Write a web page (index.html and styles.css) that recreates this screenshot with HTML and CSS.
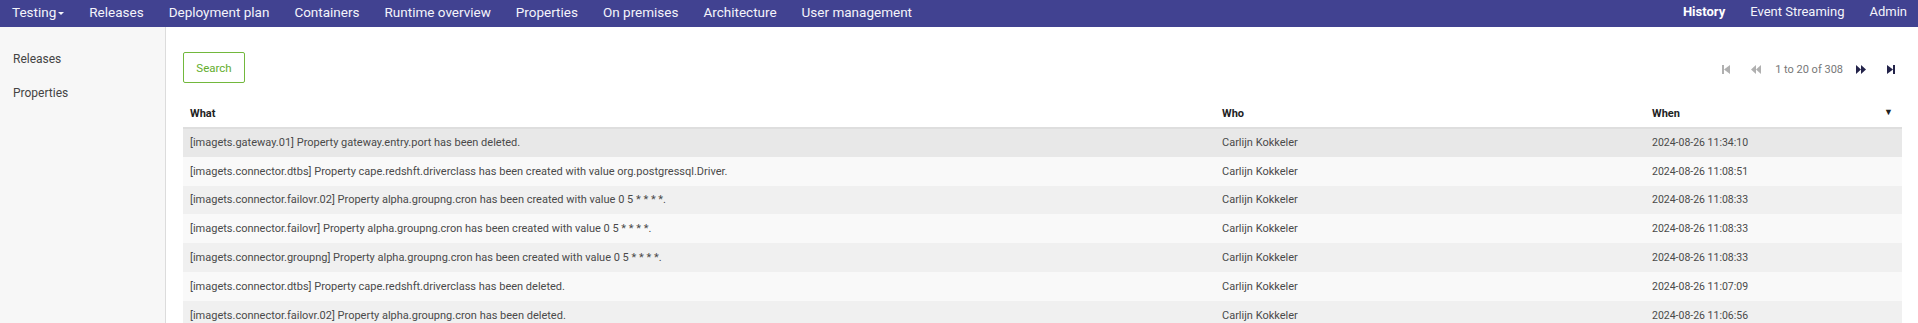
FILE: index.html
```html
<!DOCTYPE html>
<html lang="en">
<head>
    <meta charset="UTF-8"/>
    <meta name="viewport" content="width=device-width,initial-scale=1.0"/>
    <title>History</title>
    <link rel="stylesheet" href="styles.css">
</head>
<body>
<nav class="topbar">
    <ul class="nav nav-left">
        <li><a href="#" class="dropdown">Testing<span class="caret"></span></a></li>
        <li><a href="#">Releases</a></li>
        <li><a href="#">Deployment plan</a></li>
        <li><a href="#">Containers</a></li>
        <li><a href="#">Runtime overview</a></li>
        <li><a href="#">Properties</a></li>
        <li><a href="#">On premises</a></li>
        <li><a href="#">Architecture</a></li>
        <li><a href="#">User management</a></li>
    </ul>
    <ul class="nav nav-right">
        <li><a href="#" class="active">History</a></li>
        <li><a href="#">Event Streaming</a></li>
        <li><a href="#">Admin</a></li>
    </ul>
</nav>

<div class="layout">
    <aside class="sidebar">
        <ul>
            <li><a href="#">Releases</a></li>
            <li><a href="#">Properties</a></li>
        </ul>
    </aside>

    <main class="content">
        <div class="toolbar">
            <button class="btn-search">Search</button>
            <div class="pager">
                <svg class="pg disabled" width="8" height="9" viewBox="0 0 8 9"><rect x="0" y="0" width="2" height="9"/><polygon points="8,0 2,4.5 8,9"/></svg>
                <svg class="pg disabled" width="10" height="9" viewBox="0 0 10 9"><polygon points="5,0 0,4.5 5,9"/><polygon points="10,0 5,4.5 10,9"/></svg>
                <span class="pg-text">1 to 20 of 308</span>
                <svg class="pg" width="10" height="9" viewBox="0 0 10 9"><polygon points="0,0 5,4.5 0,9"/><polygon points="5,0 10,4.5 5,9"/></svg>
                <svg class="pg" width="8" height="9" viewBox="0 0 8 9"><polygon points="0,0 6,4.5 0,9"/><rect x="6" y="0" width="2" height="9"/></svg>
            </div>
        </div>

        <table class="history">
            <thead>
            <tr>
                <th class="col-what">What</th>
                <th class="col-who">Who</th>
                <th class="col-when">When <span class="sort">&#9660;</span></th>
            </tr>
            </thead>
            <tbody>
            <tr class="hover">
                <td>[imagets.gateway.01] Property gateway.entry.port has been deleted.</td>
                <td>Carlijn Kokkeler</td>
                <td class="date">2024-08-26 11:34:10</td>
            </tr>
            <tr>
                <td>[imagets.connector.dtbs] Property cape.redshft.driverclass has been created with value org.postgressql.Driver.</td>
                <td>Carlijn Kokkeler</td>
                <td class="date">2024-08-26 11:08:51</td>
            </tr>
            <tr>
                <td>[imagets.connector.failovr.02] Property alpha.groupng.cron has been created with value 0 5 * * * *.</td>
                <td>Carlijn Kokkeler</td>
                <td class="date">2024-08-26 11:08:33</td>
            </tr>
            <tr>
                <td>[imagets.connector.failovr] Property alpha.groupng.cron has been created with value 0 5 * * * *.</td>
                <td>Carlijn Kokkeler</td>
                <td class="date">2024-08-26 11:08:33</td>
            </tr>
            <tr>
                <td>[imagets.connector.groupng] Property alpha.groupng.cron has been created with value 0 5 * * * *.</td>
                <td>Carlijn Kokkeler</td>
                <td class="date">2024-08-26 11:08:33</td>
            </tr>
            <tr>
                <td>[imagets.connector.dtbs] Property cape.redshft.driverclass has been deleted.</td>
                <td>Carlijn Kokkeler</td>
                <td class="date">2024-08-26 11:07:09</td>
            </tr>
            <tr>
                <td>[imagets.connector.failovr.02] Property alpha.groupng.cron has been deleted.</td>
                <td>Carlijn Kokkeler</td>
                <td class="date">2024-08-26 11:06:56</td>
            </tr>
            </tbody>
        </table>
    </main>
</div>
</body>
</html>
```

FILE: styles.css
```css
* {
    margin: 0;
    padding: 0;
    box-sizing: border-box
}

body {
    font-family: Roboto, 'Liberation Sans', Arial, sans-serif;
    background: #fff;
    color: #444;
    overflow: hidden
}

a {
    text-decoration: none;
    color: inherit
}

ul {
    list-style: none
}

.topbar {
    display: flex;
    justify-content: space-between;
    height: 27px;
    background: #414291
}

.nav {
    display: flex
}

.nav a {
    display: block;
    padding: 0 12.5px;
    line-height: 24px;
    font-size: 13.5px;
    color: #f4f4fb
}

.nav-left li:first-child a {
    padding-left: 12px
}

.nav-right a {
    font-size: 13px
}

.nav-right li:last-child a {
    padding-right: 11px
}

.nav a.active {
    font-weight: bold;
    color: #fff
}

.caret {
    display: inline-block;
    width: 0;
    height: 0;
    margin-left: 2px;
    vertical-align: middle;
    border-top: 3px solid #f4f4fb;
    border-left: 3px solid transparent;
    border-right: 3px solid transparent
}

.layout {
    display: flex;
    height: calc(100vh - 27px)
}

.sidebar {
    width: 166px;
    flex-shrink: 0;
    background: #f7f7f7;
    border-right: 1px solid #dcdcdc;
    padding-top: 15px
}

.sidebar a {
    display: block;
    height: 34px;
    line-height: 34px;
    padding-left: 13px;
    font-size: 12px;
    color: #444
}

.content {
    flex: 1;
    padding: 25px 16px 0 17px
}

.toolbar {
    display: flex;
    justify-content: space-between;
    align-items: center
}

.btn-search {
    width: 62px;
    height: 31px;
    background: #fff;
    border: 1px solid #72b83c;
    border-radius: 2px;
    color: #63ad2d;
    font-family: inherit;
    font-size: 11.5px;
    cursor: pointer
}

.pager {
    display: flex;
    align-items: center;
    padding-right: 7px;
    margin-top: 3px
}

.pg {
    fill: #23234a;
    margin-left: 21px
}

.pg:first-child {
    margin-left: 0
}

.pg.disabled {
    fill: #b0b0b0
}

.pg-text {
    font-size: 11px;
    color: #777;
    margin-left: 14px;
    margin-right: -8px
}

.history {
    width: 100%;
    margin-top: 17px;
    border-collapse: collapse;
    font-size: 11px
}

.history th {
    height: 28px;
    padding: 0 7px;
    text-align: left;
    font-weight: bold;
    color: #222;
    border-bottom: 2px solid #dedede
}

.col-what {
    width: 1032px
}

.col-who {
    width: 430px
}

.sort {
    float: right;
    font-size: 9px;
    color: #222;
    margin-right: 2px
}

.history td {
    height: 28.8px;
    padding: 0 7px;
    color: #4a4a4a;
    white-space: nowrap
}

.history td.date {
    font-size: 10.5px
}

.history tbody tr:nth-child(odd) {
    background: #f0f0f0
}

.history tbody tr:nth-child(even) {
    background: #f9f9f9
}

.history tbody tr.hover {
    background: #e8e8e8
}
```
